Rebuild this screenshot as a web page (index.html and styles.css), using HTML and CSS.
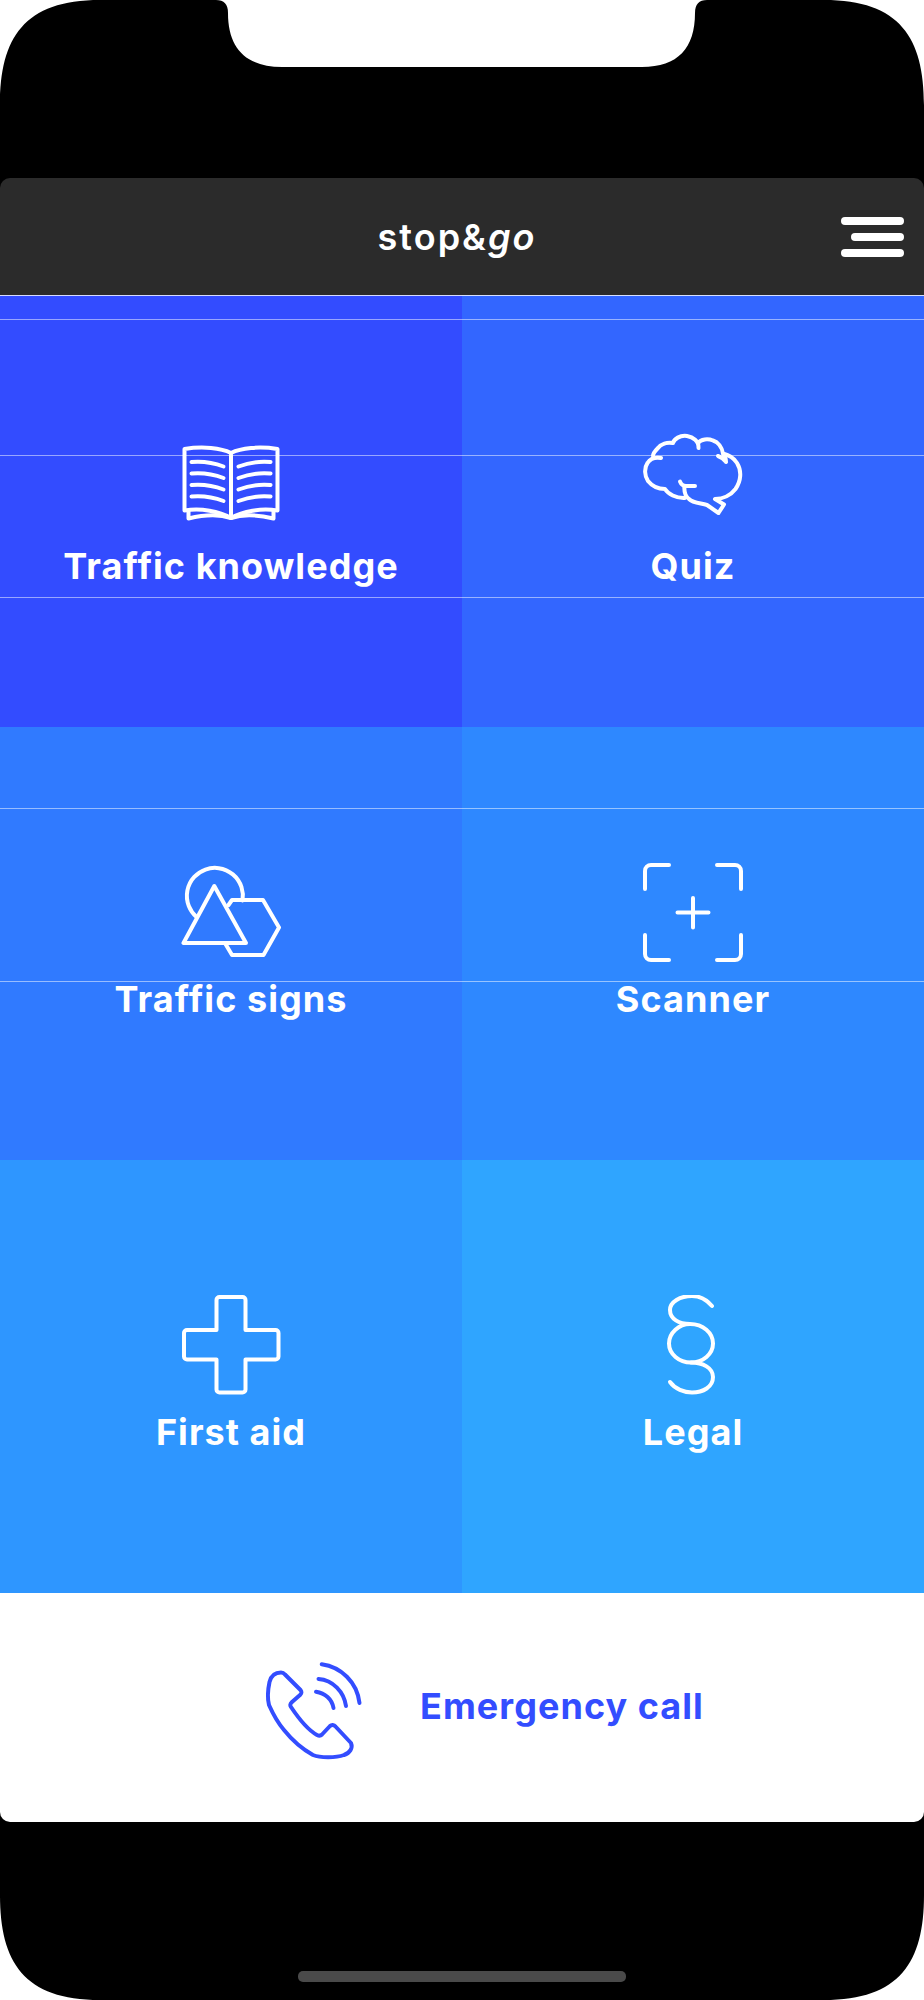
FILE: index.html
```html
<!DOCTYPE html>
<html lang="en">
<head>
  <meta charset="UTF-8" />
  <meta name="viewport" content="width=device-width, initial-scale=1.0" />
  <title>stop&amp;go</title>
  <link rel="stylesheet" href="styles.css">
</head>
<body>
  <div class="phone">
    <!-- Device outline with notch -->
    <svg class="frame" viewBox="0 0 924 2000" width="924" height="2000" aria-hidden="true">
      <path d="M0 105 C0 38 24 0 100 0 H216 C224 0 228 4 228 13 C228 48 246 67 282 67 H642 C678 67 695 48 695 13 C695 4 699 0 707 0 H824 C900 0 924 38 924 105 V1895 C924 1962 900 2000 824 2000 H100 C24 2000 0 1962 0 1895 Z" />
    </svg>

    <div class="screen">
      <header class="topbar">
        <div class="brand">stop&amp;<em>go</em></div>
        <button class="menu" aria-label="Menu"><span></span><span class="short"></span><span></span></button>
      </header>

      <nav class="tiles">
        <a class="tile tile-1">
          <svg class="icon" viewBox="0 0 100 100">
            <path d="M50 24 C40 19 22 17 3.5 20 V81.5 C20 79 38 82 50 89 C62 82 80 79 96.5 81.5 V20 C78 17 60 19 50 24 V89" />
            <path d="M7.5 82 V89.5 C22 86 38 85 50 89 C62 85 78 86 92.5 89.5 V82" />
            <path d="M10.5 33 C22 32 32 33.5 42.5 37.5 M10.5 44.5 C22 43.5 32 45 42.5 49 M10.5 56 C22 55 32 56.5 42.5 60.5 M10.5 67.5 C22 66.5 32 68 42.5 72" />
            <path d="M57.5 37.5 C68 33.5 78 32 89.5 33 M57.5 49 C68 45 78 43.5 89.5 44.5 M57.5 60.5 C68 56.5 78 55 89.5 56 M57.5 72 C68 68 78 66.5 89.5 67.5" />
          </svg>
          <span class="label">Traffic knowledge</span>
        </a>
        <a class="tile tile-2">
          <svg class="icon" viewBox="0 0 100 100">
            <path d="M18 29 C12 28 7 30 4.5 34 C1 39 1.5 47 5 52 C9 57 15 60 22 60 C25 65 33 69.5 42 69" />
            <path d="M37 52.5 C38 55 40 57 43 57 H52" />
            <path d="M41.5 57 C41 62 42 67 46 70 C50 74 57 74 64 76 L75.5 84 L81 75.5 L72 70 C80 70 88 66 92.5 60 C98 52 99 42 94 34 C91 29 86 26 80 24.5 C79 18 75 13 70 11.5 C65 9.5 58 10 55 14" />
            <path d="M55.5 19 C56 12 50 8 44 7 C37 6 31 10 30 14 C24 13 18 15 15 19 C12 22 10 25 10 27" />
            <path d="M80 24.5 C82 27 83 30 83 33 M75 27 C78 28 81 30 83 33" />
          </svg>
          <span class="label">Quiz</span>
        </a>
        <a class="tile tile-3">
          <svg class="icon" viewBox="0 0 100 100">
            <path d="M15.5 55 A28 28 0 1 1 61.5 38.5" />
            <path d="M33.3 24 L2.5 81 H65 Z" />
            <path d="M47.5 43 L51 38 H82 L98 65.5 L82.5 93 H51 L44.5 82" />
          </svg>
          <span class="label">Traffic signs</span>
        </a>
        <a class="tile tile-4">
          <svg class="icon" viewBox="0 0 100 100">
            <path d="M2 27 V9 A6 6 0 0 1 8 3 H26 M74 3 H92 A6 6 0 0 1 98 9 V27 M98 73 V92 A6 6 0 0 1 92 98 H74 M26 98 H8 A6 6 0 0 1 2 92 V73" />
            <path d="M50 36 V65.5 M34.5 50.5 H65.5" />
          </svg>
          <span class="label">Scanner</span>
        </a>
        <a class="tile tile-5">
          <svg class="icon" viewBox="0 0 100 100">
            <path d="M38.5 2 H61.5 A3 3 0 0 1 64.5 5 V35 H94.5 A3 3 0 0 1 97.5 38 V61.5 A3 3 0 0 1 94.5 64.5 H64.5 V94.5 A3 3 0 0 1 61.5 97.5 H38.5 A3 3 0 0 1 35.5 94.5 V64.5 H6 A3 3 0 0 1 3 61.5 V38 A3 3 0 0 1 6 35 H35.5 V5 A3 3 0 0 1 38.5 2 Z" />
          </svg>
          <span class="label">First aid</span>
        </a>
        <a class="tile tile-6">
          <svg class="icon" viewBox="0 0 100 100">
            <path d="M69 11 C63 4 56 1 49 1 C37 1 27 7 27 15 C27 24 36 29 47 29 C60 29 70 38 70 48.5 C70 59 60 67.5 48 67.5 C36 67.5 26 59 26 48.5 C26 38 36 29 47 29" />
            <path d="M48 67.5 C60 67.5 70 73 70 82 C70 92 60 97.5 49 97.5 C41 97.5 32 94 27 87" />
          </svg>
          <span class="label">Legal</span>
        </a>
      </nav>

      <a class="call">
        <svg class="icon" viewBox="0 0 100 100">
          <path d="M17 11.5 C11 11.5 7 15 5.5 21 C4 28 3.5 38 5 44 C9 53 14 62 20 69 C28 79 40 89 49 94 C56 97 72 97 80 94 C86 92 89 87 87 82 L71.5 65.5 C70 63.5 67.5 63.5 66 65 L58 73.5 C56.5 75 55 75 53 74 C44 69 35 58 27 46 C25.5 44 26 43 28 41 L36 34 C38 32 38 31 36.5 29 L21 13.5 C20 12.3 18.5 11.5 17 11.5 Z" />
          <path d="M52 30.7 C61 32 68 38 69.5 47 M54.5 18 C69 19 80 31 82 45 M57.7 3.3 C77 6 93 21 95.5 42" />
        </svg>
        <span class="call-text">Emergency call</span>
      </a>
    </div>

    <!-- Thin rules lying over the screen -->
    <div class="rule rule-1"></div>
    <div class="rule rule-2"></div>
    <div class="rule rule-3"></div>
    <div class="rule rule-4"></div>
    <div class="rule rule-5"></div>
    <div class="rule rule-6"></div>

    <div class="home-bar"></div>
  </div>
</body>
</html>
```

FILE: styles.css
```css
:root {
  --accent: #334dff;
}

body {
  margin: 0;
  background: #fff;
  font-family: Inter, sans-serif;
}

.phone {
  position: relative;
  width: 924px;
  height: 2000px;
  padding-top: 178px;
  box-sizing: border-box;
  overflow: hidden;
}

.frame {
  position: absolute;
  top: 0;
  left: 0;
  fill: #000;
}

.screen {
  position: relative;
  border-radius: 10px;
  overflow: hidden;
}

/* Top bar */
.topbar {
  display: grid;
  grid-template-columns: 1fr auto 1fr;
  align-items: center;
  height: 117px;
  padding-right: 20px;
  background: #2b2b2b;
}

.brand {
  grid-column: 2;
  margin-left: 10px;
  color: #fff;
  font-size: 36px;
  font-weight: 600;
  letter-spacing: 2px;
}

.brand em {
  font-style: italic;
}

.menu {
  grid-column: 3;
  justify-self: end;
  display: flex;
  flex-direction: column;
  align-items: flex-end;
  gap: 8px;
  width: 63px;
  padding: 0;
  border: none;
  background: none;
}

.menu span {
  display: block;
  width: 63px;
  height: 8px;
  border-radius: 4px;
  background: #fff;
}

.menu .short {
  width: 53px;
}

/* Tiles */
.tiles {
  display: grid;
  grid-template-columns: 462px 462px;
  grid-template-rows: 432px 433px 433px;
}

.tile {
  display: flex;
  flex-direction: column;
  align-items: center;
  padding-top: 135px;
  box-sizing: border-box;
  color: #fff;
}

.tile-1 { background: #334cff; padding-top: 134px; }
.tile-2 { background: #3366ff; padding-top: 134px; }
.tile-3 { background: #307aff; }
.tile-4 { background: #2e88ff; }
.tile-5 { background: #2e96ff; }
.tile-6 { background: #2fa5ff; }

.icon {
  display: block;
  width: 100px;
  height: 100px;
  fill: none;
  stroke: currentColor;
  stroke-width: 4;
  stroke-linecap: round;
  stroke-linejoin: round;
}

.label {
  margin-top: 13px;
  font-size: 36px;
  font-weight: 700;
  letter-spacing: 1.05px;
  line-height: 48px;
}

/* Emergency call */
.call {
  display: flex;
  align-items: center;
  gap: 56px;
  height: 229px;
  padding-left: 264px;
  background: #fff;
  color: var(--accent);
}

.call .icon {
  margin-top: 7px;
}

.call-text {
  margin-bottom: 4px;
  font-size: 36px;
  font-weight: 700;
  letter-spacing: 1.05px;
}

/* Overlay rules */
.rule {
  position: absolute;
  left: 0;
  right: 0;
  height: 1px;
  background: rgba(255, 255, 255, 0.5);
}

.rule-1 { top: 295px; background: rgba(255, 255, 255, 0.8); }
.rule-2 { top: 319px; }
.rule-3 { top: 455px; }
.rule-4 { top: 597px; }
.rule-5 { top: 808px; }
.rule-6 { top: 981px; }

.home-bar {
  position: absolute;
  top: 1971px;
  left: 298px;
  width: 328px;
  height: 11px;
  border-radius: 5px;
  background: #4a4a4a;
}
```
